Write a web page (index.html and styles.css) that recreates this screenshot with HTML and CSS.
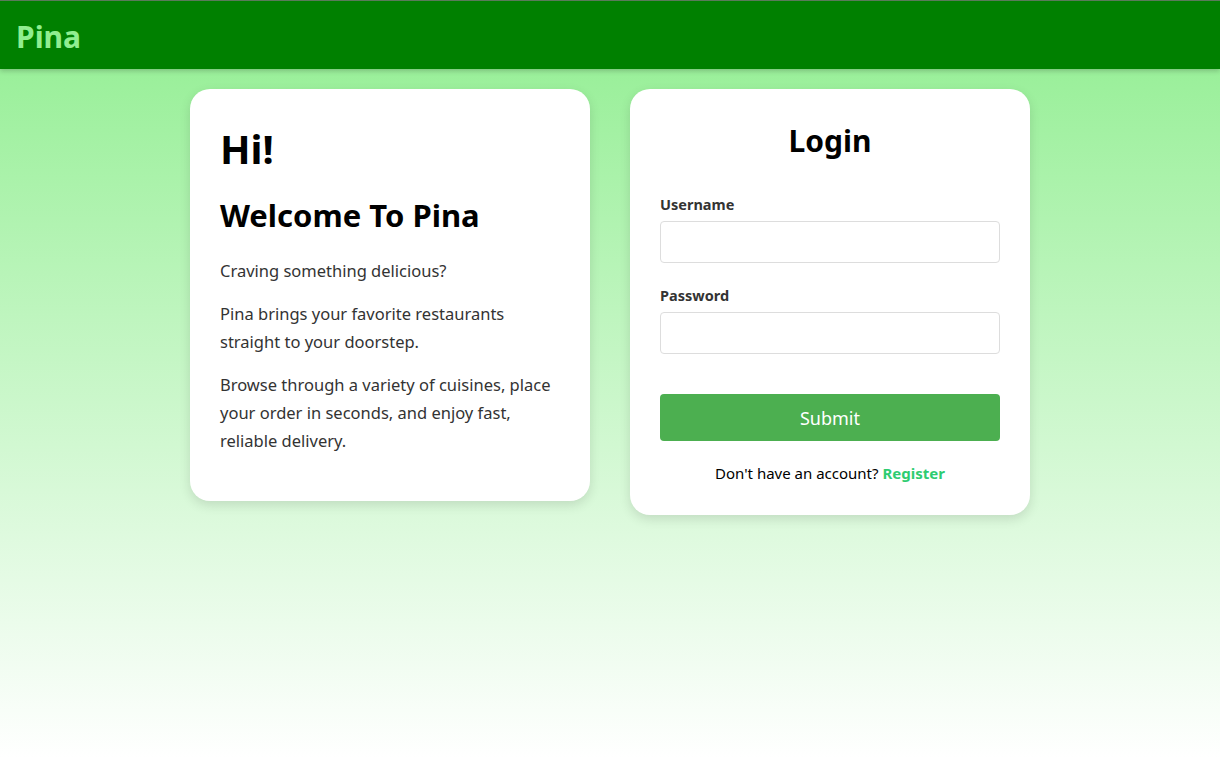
FILE: index.html
```html
<!DOCTYPE html>
<html lang="en">
<head>
<meta charset="utf-8">
<title>Pina</title>
<link rel="stylesheet" href="styles.css">
</head>
<body>
<header class="topbar">
  <div class="brand">Pina</div>
</header>
<main class="content">
  <section class="card welcome">
    <h1 class="hi">Hi!</h1>
    <h2 class="welcome-title">Welcome To Pina</h2>
    <p>Craving something delicious?</p>
    <p>Pina brings your favorite restaurants straight to your doorstep.</p>
    <p>Browse through a variety of cuisines, place your order in seconds, and enjoy fast, reliable delivery.</p>
  </section>
  <section class="card login">
    <h2 class="login-title">Login</h2>
    <form class="login-form">
      <label class="field">
        <span class="field-label">Username</span>
        <input type="text" class="field-input">
      </label>
      <label class="field">
        <span class="field-label">Password</span>
        <input type="password" class="field-input">
      </label>
      <button type="button" class="submit">Submit</button>
    </form>
    <p class="register">Don't have an account? <a href="#" class="register-link">Register</a></p>
  </section>
</main>
</body>
</html>
```

FILE: styles.css
```css
* { box-sizing: border-box; }
html, body { margin: 0; padding: 0; }
body {
  font-family: "Noto Sans", "Open Sans", sans-serif;
  min-height: 758px;
  background: linear-gradient(to bottom, #90ee90, #ffffff);
  color: #333;
}
.topbar {
  height: 69px;
  background: #008000;
  border-top: 1px solid #5a7a5a;
  display: flex;
  align-items: center;
  padding: 3px 16px 0;
  box-shadow: 0 2px 5px rgba(0, 0, 0, 0.2);
}
.brand {
  color: #90ee90;
  font-size: 30px;
  font-weight: 700;
  line-height: 1;
}
.content {
  display: flex;
  justify-content: center;
  align-items: flex-start;
  gap: 40px;
  padding-top: 20px;
}
.card {
  width: 400px;
  background: #fff;
  border-radius: 20px;
  box-shadow: 0 4px 12px rgba(0, 0, 0, 0.12);
  padding: 30px;
}
.welcome { padding-bottom: 32px; }
.hi {
  margin: 2px 0 0;
  font-size: 40px;
  line-height: 56px;
  color: #000;
}
.welcome-title {
  margin: 18px 0 22px;
  font-size: 31px;
  line-height: 40px;
  color: #000;
}
.welcome p {
  margin: 0 0 15px;
  font-size: 16.5px;
  line-height: 28px;
  color: #333;
}
.welcome p:last-child { margin-bottom: 14px; }
.login { padding-bottom: 32px; }
.login-title {
  margin: 0 0 31px;
  text-align: center;
  font-size: 30px;
  line-height: 44px;
  color: #000;
}
.login-form { display: flex; flex-direction: column; }
.field { display: flex; flex-direction: column; margin-bottom: 22px; }
.field-label {
  font-size: 14.5px;
  font-weight: 700;
  color: #333;
  line-height: 20px;
  margin-bottom: 7px;
}
.field-input {
  height: 42px;
  border: 1px solid #ddd;
  border-radius: 4px;
  font: inherit;
  padding: 0 10px;
}
.submit {
  margin-top: 18px;
  height: 47px;
  border: 0;
  border-radius: 4px;
  background: #4caf50;
  color: #fff;
  font-family: inherit;
  font-size: 18px;
}
.register {
  margin: 22px 0 0;
  text-align: center;
  font-size: 15px;
  color: #000;
}
.register-link {
  color: #2ecc71;
  font-weight: 700;
  text-decoration: none;
}
```
